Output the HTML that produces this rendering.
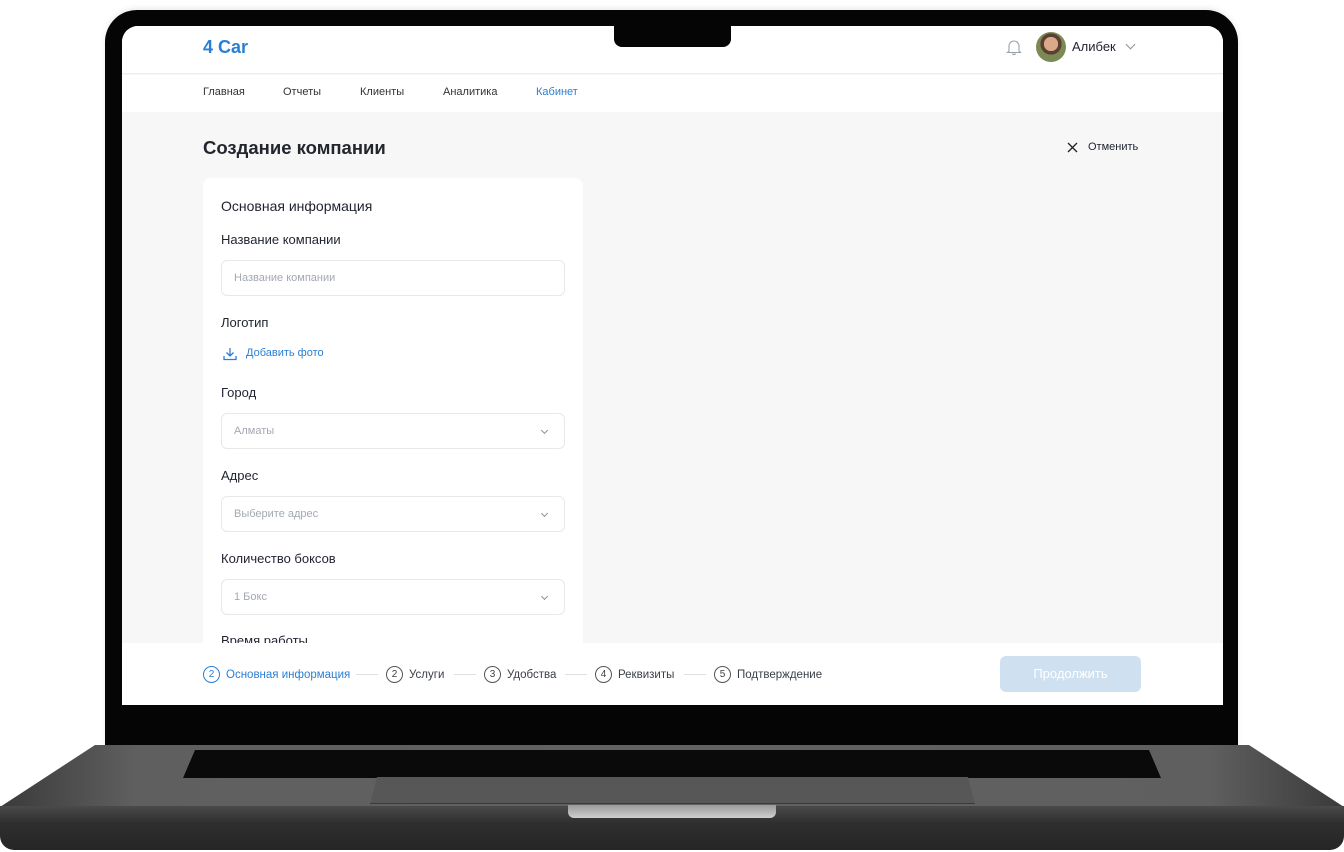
<!DOCTYPE html>
<html><head><meta charset="utf-8"><style>
*{margin:0;padding:0;box-sizing:border-box}
body{width:1344px;height:852px;background:#fff;position:relative;overflow:hidden;font-family:"Liberation Sans",sans-serif;color:#1f2330}
.abs{position:absolute}
.bezel{left:105px;top:10px;width:1133px;height:740px;background:#050505;border-radius:32px 32px 0 0;box-shadow:0 -2px 6px rgba(0,0,0,.08)}
.screen{left:122px;top:26px;width:1101px;height:679px;background:#f7f7f7;border-radius:16px 16px 0 0;overflow:hidden}
.notch{left:614px;top:26px;width:117px;height:21px;background:#050505;border-radius:0 0 8px 8px}
.t{position:absolute;white-space:nowrap}
.inp{position:absolute;left:99px;width:344px;height:36px;border:1px solid #e6e8ec;border-radius:6px;background:#fff;font-size:11px;color:#a3a8b2;padding:11px 12px}
.chev{position:absolute;right:17px;top:14px;width:5px;height:5px;border-right:1.2px solid #8a8f99;border-bottom:1.2px solid #8a8f99;transform:rotate(45deg)}
.lbl{font-size:13px;color:#1f2330;left:99px}
.step{position:absolute;top:23px;font-size:11.5px;color:#3a3e48;display:flex;align-items:center;gap:6px}
.c{width:17px;height:17px;border:1.2px solid #555;border-radius:50%;font-size:10px;text-align:center;line-height:15px}
.line{position:absolute;top:31px;height:1px;background:#e0e0e0}
</style></head><body>
<div class="abs bezel"></div>
<div class="abs screen">
  <div class="abs" style="left:0;top:0;width:1101px;height:48px;background:#fff;border-bottom:1px solid #eee"></div>
  <div class="t" style="left:81px;top:11px;font-size:18px;font-weight:bold;color:#2a7fd4">4 Car</div>
  <svg class="abs" style="left:884px;top:12px" width="16" height="18" viewBox="0 0 16 18"><path d="M3 13V8a5 5 0 0 1 10 0v5l1.5 1.5h-13z M6.5 15.5a1.6 1.6 0 0 0 3 0" fill="none" stroke="#9aa0aa" stroke-width="1.1"/></svg>
  <div class="abs" style="left:914px;top:6px;width:30px;height:30px;border-radius:50%;background:radial-gradient(circle at 50% 40%,#d9a98a 0 30%,#5a4030 31% 45%,#7b8a55 46%)"></div>
  <div class="t" style="left:950px;top:13px;font-size:13px">Алибек</div>
  <div class="abs" style="left:1005px;top:15px;width:7px;height:7px;border-right:1.2px solid #8a8f99;border-bottom:1.2px solid #8a8f99;transform:rotate(45deg)"></div>
  <div class="abs" style="left:0;top:49px;width:1101px;height:37px;background:#fff"></div>
  <div class="t" style="left:81px;top:60px;font-size:11px;color:#333">Главная</div>
  <div class="t" style="left:161px;top:60px;font-size:11px;color:#333">Отчеты</div>
  <div class="t" style="left:238px;top:60px;font-size:11px;color:#333">Клиенты</div>
  <div class="t" style="left:321px;top:60px;font-size:11px;color:#333">Аналитика</div>
  <div class="t" style="left:414px;top:60px;font-size:11px;color:#2a7fd4">Кабинет</div>
  <div class="t" style="left:81px;top:111px;font-size:18.5px;font-weight:bold;color:#23262f">Создание компании</div>
  <svg class="abs" style="left:945px;top:116px" width="11" height="11"><path d="M1 1l9 9M10 1l-9 9" stroke="#222" stroke-width="1.3"/></svg>
  <div class="t" style="left:966px;top:115px;font-size:11px">Отменить</div>
  <div class="abs" style="left:81px;top:152px;width:380px;height:500px;background:#fff;border-radius:8px"></div>
  <div style="position:absolute;left:0;top:0;">
    <div class="t" style="left:99px;top:172px;font-size:14px">Основная информация</div>
    <div class="t lbl" style="top:206px">Название компании</div>
    <div class="inp" style="top:234px">Название компании</div>
    <div class="t lbl" style="top:289px">Логотип</div>
    <svg class="abs" style="left:101px;top:321px" width="14" height="14"><path d="M7 1v8M3.5 5.5L7 9l3.5-3.5M1 9v3.5h12V9" fill="none" stroke="#2a7fd4" stroke-width="1.3"/></svg>
    <div class="t" style="left:124px;top:321px;font-size:11px;color:#2a7fd4">Добавить фото</div>
    <div class="t lbl" style="top:359px">Город</div>
    <div class="inp" style="top:387px">Алматы<span class="chev"></span></div>
    <div class="t lbl" style="top:442px">Адрес</div>
    <div class="inp" style="top:470px">Выберите адрес<span class="chev"></span></div>
    <div class="t lbl" style="top:525px">Количество боксов</div>
    <div class="inp" style="top:553px">1 Бокс<span class="chev"></span></div>
    <div class="t lbl" style="top:607px">Время работы</div>
  </div>
  <div class="abs" style="left:0;top:617px;width:1101px;height:62px;background:#fff">
    <div class="step" style="left:81px;color:#2a7fd4"><div class="c" style="border-color:#2a7fd4">2</div>Основная информация</div>
    <div class="line" style="left:234px;width:22px"></div>
    <div class="step" style="left:264px"><div class="c">2</div>Услуги</div>
    <div class="line" style="left:332px;width:22px"></div>
    <div class="step" style="left:362px"><div class="c">3</div>Удобства</div>
    <div class="line" style="left:443px;width:22px"></div>
    <div class="step" style="left:473px"><div class="c">4</div>Реквизиты</div>
    <div class="line" style="left:562px;width:22px"></div>
    <div class="step" style="left:592px"><div class="c">5</div>Подтверждение</div>
    <div class="abs" style="left:878px;top:13px;width:141px;height:36px;background:#cfe1f1;border-radius:6px;color:#fff;font-size:13px;text-align:center;line-height:36px">Продолжить</div>
  </div>
</div>
<div class="abs notch"></div>
<div class="abs" style="left:0;top:745px;width:1344px;height:62px;background:linear-gradient(90deg,#3a3a3a,#5f5f5f 10%,#626262 50%,#5f5f5f 90%,#3a3a3a);clip-path:polygon(95px 0,1249px 0,1344px 62px,0 62px)"></div>
<div class="abs" style="left:0;top:806px;width:1344px;height:44px;background:linear-gradient(#4a4a4a,#2e2e2e 40%,#262626);border-radius:0 0 14px 14px"></div>
<div class="abs" style="left:183px;top:750px;width:978px;height:28px;background:#0a0a0a;clip-path:polygon(12px 0,966px 0,978px 28px,0 28px)"></div>
<div class="abs" style="left:370px;top:777px;width:605px;height:27px;background:#575757;clip-path:polygon(7px 0,598px 0,605px 27px,0 27px);border-bottom:1px solid #3a3a3a"></div>
<div class="abs" style="left:568px;top:805px;width:208px;height:13px;background:linear-gradient(#9a9a9a,#cfcfcf);border-radius:0 0 6px 6px"></div>
</body></html>
